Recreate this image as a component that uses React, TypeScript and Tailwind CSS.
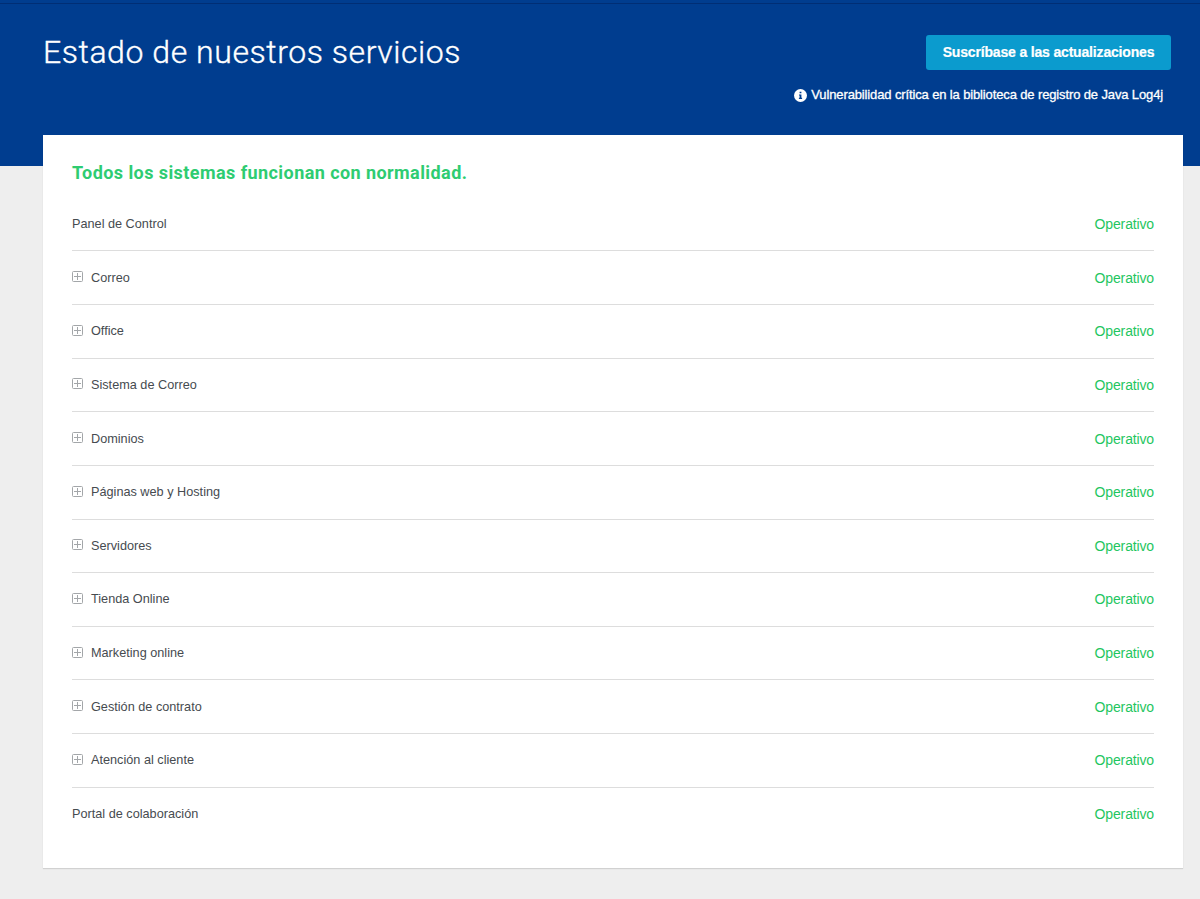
const services = [
  { name: "Panel de Control", group: false },
  { name: "Correo", group: true },
  { name: "Office", group: true },
  { name: "Sistema de Correo", group: true },
  { name: "Dominios", group: true },
  { name: "Páginas web y Hosting", group: true },
  { name: "Servidores", group: true },
  { name: "Tienda Online", group: true },
  { name: "Marketing online", group: true },
  { name: "Gestión de contrato", group: true },
  { name: "Atención al cliente", group: true },
  { name: "Portal de colaboración", group: false },
];

function PlusBoxIcon() {
  return (
    <svg
      width="11"
      height="11"
      viewBox="0 0 11 11"
      fill="none"
      stroke="#a3a6a9"
      className="mr-2 mb-[2px] shrink-0"
    >
      <rect x="0.5" y="0.5" width="10" height="10" rx="1" />
      <path d="M5.5 2v7M2 5.5h7" />
    </svg>
  );
}

function InfoIcon() {
  return (
    <svg width="13" height="13" viewBox="0 0 13 13" className="mr-1 shrink-0">
      <circle cx="6.5" cy="6.5" r="6.5" fill="#fff" />
      <path
        d="M5.6 2.7h1.8v1.6H5.6zM5 5.4h2.4v3.4h.7v1.1H4.9V8.8h.7V6.5H5z"
        fill="#003d8f"
      />
    </svg>
  );
}

export default function App() {
  return (
    <div className="h-[899px] overflow-hidden bg-[#eeeeee] font-['Liberation_Sans',Arial,sans-serif]">
      <header className="h-[166px] border-t-[3px] border-[#003d8f] bg-[#003d8f]">
        <div className="h-px bg-[#002e75]" />
        <div className="flex justify-between pt-[31px] pr-[29px] pl-[43px]">
          <h1 className="-mt-px font-['Roboto',sans-serif] text-[32px] leading-[36px] font-light tracking-[0.56px] whitespace-nowrap text-white [-webkit-text-stroke:0.35px_white]">
            Estado de nuestros servicios
          </h1>
          <div className="flex flex-col items-end">
            <button className="h-[35px] w-[245px] rounded-[3px] bg-[#0b9bce] text-[14px] font-bold tracking-[-0.17px] whitespace-nowrap text-white [-webkit-text-stroke:0.2px_white]">
              Suscríbase a las actualizaciones
            </button>
            <a className="mt-[17px] mr-2 flex items-center text-[13px] leading-4 tracking-[-0.13px] whitespace-nowrap text-white [-webkit-text-stroke:0.3px_white]">
              <InfoIcon />
              Vulnerabilidad crítica en la biblioteca de registro de Java Log4j
            </a>
          </div>
        </div>
      </header>

      <main className="relative -mt-[31px] mr-[17px] ml-[43px] h-[733px] bg-white px-[29px] pt-[25px] shadow-[0_1px_1px_rgba(0,0,0,0.12)]">
        <h2 className="font-['Roboto',sans-serif] text-[18px] leading-[26px] font-bold tracking-[0.43px] whitespace-nowrap text-[#2ecc71]">
          Todos los sistemas funcionan con normalidad.
        </h2>
        <ul className="mt-[11.8px]">
          {services.map((service) => (
            <li
              key={service.name}
              className="flex h-[53.64px] items-center justify-between border-b border-[#dddddd] last:border-transparent"
            >
              <span className="flex items-center text-[12.7px] leading-5 text-[#464b50]">
                {service.group && <PlusBoxIcon />}
                {service.name}
              </span>
              <span className="text-[14px] leading-5 tracking-[-0.14px] text-[#1fc65f]">
                Operativo
              </span>
            </li>
          ))}
        </ul>
      </main>
    </div>
  );
}
